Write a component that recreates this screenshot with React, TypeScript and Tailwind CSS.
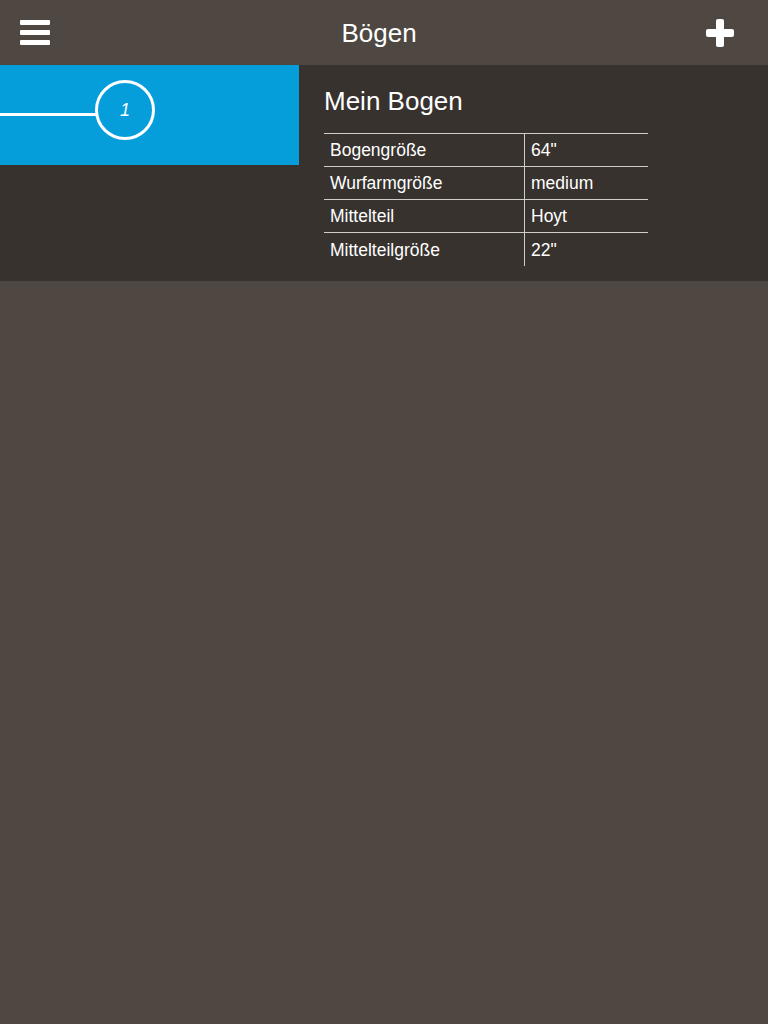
import React from "react";

const rows: [string, string][] = [
  ["Bogengröße", '64"'],
  ["Wurfarmgröße", "medium"],
  ["Mittelteil", "Hoyt"],
  ["Mittelteilgröße", '22"'],
];

export default function App() {
  return (
    <div
      className="w-[768px] h-[1024px] bg-[#4e4742] text-white flex flex-col"
      style={{ fontFamily: '"Liberation Sans", Arial, sans-serif' }}
    >
      <header className="h-[65px] flex items-center justify-between px-[20px] relative">
        <div className="flex flex-col gap-[5px] w-[30px]">
          <div className="h-[5px] bg-white rounded-[1px]" />
          <div className="h-[5px] bg-white rounded-[1px]" />
          <div className="h-[5px] bg-white rounded-[1px]" />
        </div>
        <div className="text-[26px] leading-none pl-[2px]">Bögen</div>
        <svg width="28" height="28" viewBox="0 0 28 28" className="mr-[14px]">
          <rect x="10" y="0" width="8" height="28" rx="2" fill="white" />
          <rect x="0" y="10" width="28" height="8" rx="2" fill="white" />
        </svg>
      </header>
      <div className="h-[216px] bg-[#37322e] flex">
        <div className="w-[299px] h-[100px] bg-[#069ddb] flex items-center">
          <div className="w-[96px] h-[3px] bg-white mt-[-2px]" />
          <div className="w-[60px] h-[60px] rounded-full border-[3px] border-white flex items-center justify-center -ml-[1px] mt-[-10px]">
            <span className="italic text-[18px] leading-none">1</span>
          </div>
        </div>
        <div className="pl-[25px] pt-[22px]">
          <div className="text-[26px] leading-none h-[46px] pt-[1px]">Mein Bogen</div>
          <div className="w-[324px] border-t border-[#d0ccc8]">
            {rows.map(([k, v], i) => (
              <div
                key={k}
                className={`flex h-[33px] ${i < rows.length - 1 ? "border-b border-[#d0ccc8]" : ""}`}
              >
                <div className="w-[201px] border-r border-[#d0ccc8] pl-[6px] flex items-center text-[17.5px] pt-[1px]">
                  {k}
                </div>
                <div className="pl-[6px] flex items-center text-[17.5px] pt-[1px]">{v}</div>
              </div>
            ))}
          </div>
        </div>
      </div>
    </div>
  );
}
